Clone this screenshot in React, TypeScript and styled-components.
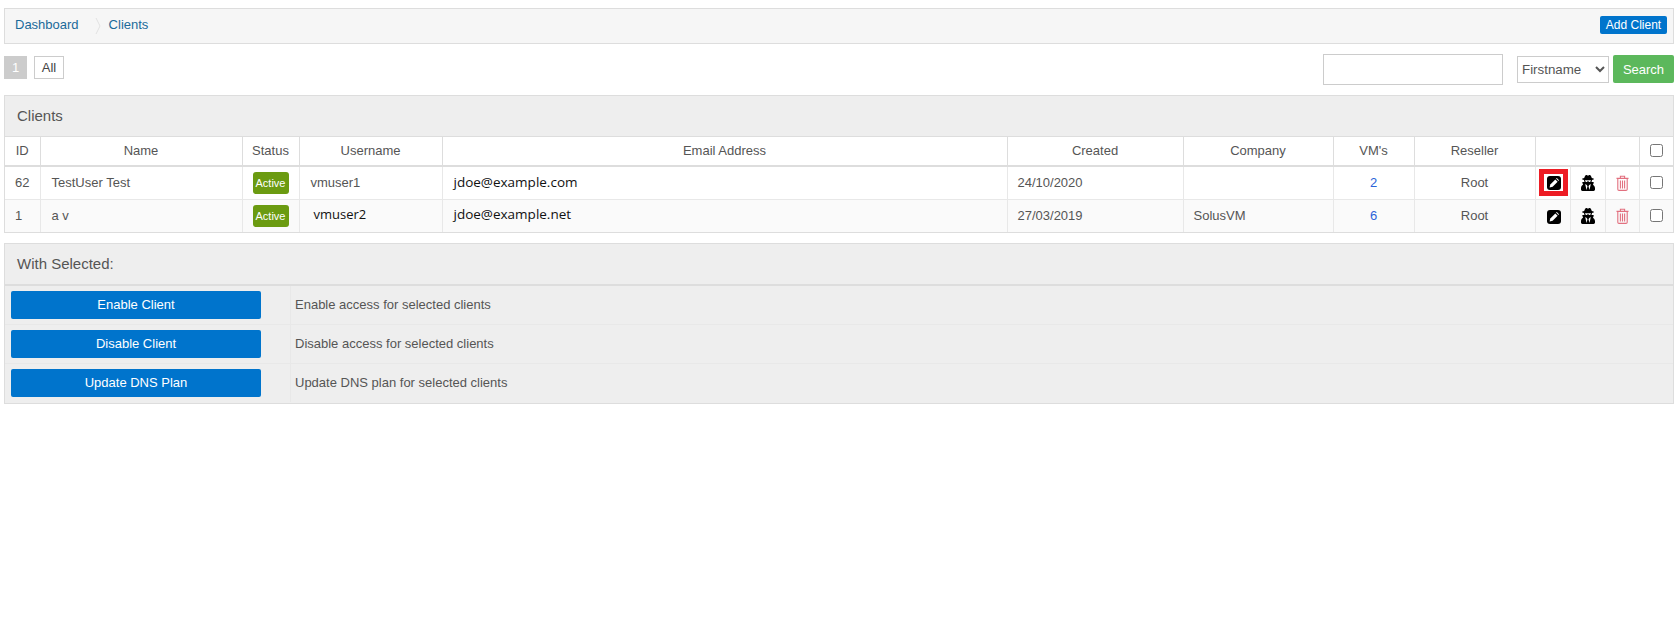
import React from "react";
import styled, { createGlobalStyle } from "styled-components";
import { FaUserSecret } from "react-icons/fa";

const Global = createGlobalStyle`
  html, body { margin: 0; background: #fff; }
  body { font-family: "Liberation Sans", Arial, sans-serif; font-size: 13px; color: #555; }
`;
const Page = styled.div`
  padding: 8px 6px 0 4px;
  display: flex;
  flex-direction: column;
`;
const Crumbs = styled.div`
  height: 36px;
  box-sizing: border-box;
  background: #f6f6f6;
  border: 1px solid #ddd;
  display: flex;
  align-items: center;
  padding: 0 6px 0 10px;
  color: #1f6f9c;
`;
const CrumbLink = styled.a`
  color: #1a6a9a;
  font-size: 13px;
  line-height: 16px;
  margin-top: -2px;
`;
const CrumbSep = styled.svg`
  width: 6px;
  height: 18px;
  margin: 0 8px 0 16px;
`;
const AddClient = styled.button`
  margin-left: auto;
  margin-top: -2px;
  height: 18px;
  width: 67px;
  padding: 0;
  border: 0;
  border-radius: 2px;
  background: #0074cc;
  color: #fff;
  font: 12px "Liberation Sans", Arial, sans-serif;
`;
const Toolbar = styled.div`
  height: 51px;
  display: flex;
  align-items: flex-start;
`;
const PageNow = styled.span`
  margin-top: 12px;
  width: 23px;
  height: 23px;
  background: #ccc;
  color: #fff;
  display: flex;
  align-items: center;
  justify-content: center;
`;
const PageAll = styled.span`
  margin: 12px 0 0 7px;
  width: 30px;
  height: 23px;
  box-sizing: border-box;
  border: 1px solid #ccc;
  color: #444;
  display: flex;
  align-items: center;
  justify-content: center;
`;
const SearchInput = styled.input`
  margin: 10px 0 0 auto;
  width: 180px;
  height: 31px;
  box-sizing: border-box;
  border: 1px solid #ccc;
  background: #fff;
`;
const FieldSelect = styled.select`
  margin: 12px 0 0 14px;
  width: 92px;
  height: 27px;
  box-sizing: border-box;
  border: 1px solid #ccc;
  background: #fff;
  color: #555;
  font: 13.33px "Liberation Sans", Arial, sans-serif;
`;
const SearchButton = styled.button`
  margin: 11px 0 0 4px;
  width: 61px;
  height: 28px;
  padding: 0;
  border: 0;
  border-radius: 2px;
  background: #5cb85c;
  color: #fff;
  font: 13px "Liberation Sans", Arial, sans-serif;
`;
const Panel = styled.section<{ $gap?: number }>`
  border: 1px solid #ddd;
  margin-top: ${(p) => p.$gap ?? 0}px;
  background: #fff;
`;
const PanelTitle = styled.h2`
  margin: 0;
  height: 40px;
  padding-left: 12px;
  background: #eee;
  font: 400 15px/40px "Liberation Sans", Arial, sans-serif;
  color: #555;
`;
const ActionTitle = styled(PanelTitle)`
  border-bottom: 1px solid #ddd;
`;
const Table = styled.table`
  width: 100%;
  table-layout: fixed;
  border-collapse: collapse;
`;
const Head = styled.th`
  height: 26px;
  padding: 0 0 2px;
  font-weight: 400;
  font-size: 13px;
  color: #555;
  border: 1px solid #ddd;
  border-bottom-width: 2px;
  text-align: center;
  &:first-child { border-left: 0; }
  &:last-child { border-right: 0; }
`;
const Row = styled.tr<{ $alt?: boolean }>`
  background: ${(p) => (p.$alt ? "#fafafa" : "#fff")};
  height: 33px;
`;
const Cell = styled.td<{ $center?: boolean; $pad?: number }>`
  padding: 0 0 0 ${(p) => p.$pad ?? (p.$center ? 0 : 11)}px;
  font-size: 13px;
  color: #555;
  border: 1px solid #e8e8e8;
  text-align: ${(p) => (p.$center ? "center" : "left")};
  overflow: hidden;
  white-space: nowrap;
  &:first-child { border-left: 0; }
  &:last-child { border-right: 0; }
  tr:last-child > & { border-bottom: 0; }
`;
const Badge = styled.span`
  display: inline-block;
  vertical-align: middle;
  margin-top: 1px;
  width: 36px;
  height: 22px;
  line-height: 22px;
  text-align: center;
  border-radius: 3px;
  background: #6b9b11;
  color: #fff;
  font-size: 11px;
  font-weight: 400;
`;
const Pasted = styled.span<{ $up?: number; $size?: number }>`
  position: relative;
  top: -${(p) => p.$up ?? 1}px;
  font-family: "Open Sans", "Noto Sans", sans-serif;
  font-size: ${(p) => p.$size ?? 13}px;
  color: #111;
`;
const VmLink = styled.a`
  color: #2a62d8;
  font-size: 13px;
`;
const IconWrap = styled.span<{ $hi?: boolean }>`
  display: inline-flex;
  align-items: center;
  justify-content: center;
  vertical-align: middle;
  box-sizing: border-box;
  width: ${(p) => (p.$hi ? "29px" : "auto")};
  height: ${(p) => (p.$hi ? "27px" : "auto")};
  border: ${(p) => (p.$hi ? "5px solid #ed1c24" : "0")};
  color: #000;
`;
const Check = styled.input`
  display: block;
  margin: 0 auto;
  width: 13px;
  height: 13px;
`;
const ActionRow = styled.div<{ $first?: boolean }>`
  display: grid;
  grid-template-columns: 285px 1fr;
  height: 39px;
  background: #eee;
  border-top: 1px solid ${(p) => (p.$first ? "#ddd" : "#e8e8e8")};
  box-sizing: border-box;
`;
const ButtonCell = styled.div`
  padding: 5px 0 0 6px;
`;
const ActionButton = styled.button`
  display: block;
  width: 250px;
  height: 28px;
  padding: 0 0 2px;
  border: 0;
  border-radius: 2px;
  background: #0074cc;
  color: #fff;
  font: 13px "Liberation Sans", Arial, sans-serif;
`;
const ActionText = styled.div`
  display: flex;
  align-items: center;
  padding: 0 0 2px 4px;
  border-left: 1px solid #e8e8e8;
  font-size: 13px;
  color: #555;
`;
const ActionList = styled.div`
  padding-bottom: 1px;
  background: #eee;
`;

const EditIcon = () => (
  <svg width="14" height="14" viewBox="0 0 14 14">
    <rect width="14" height="14" rx="3" fill="#000" />
    <path d="M2.6 11.4l.7-3 5-5 2.3 2.3-5 5z" fill="#fff" />
    <path d="M9 2.6l.8-.6 2.2 2.2-.6.8z" fill="#fff" />
  </svg>
);
const TrashIcon = () => (
  <svg width="13" height="16" viewBox="0 0 13 16" fill="none" stroke="#e2707f" strokeWidth="1.1">
    <path d="M.5 3.4h12M4.4 3.2V1.2h4.2v2M1.8 3.6v10.6c0 .7.5 1.2 1.2 1.2h7c.7 0 1.2-.5 1.2-1.2V3.6" />
    <path d="M4.4 5.6v7.8M6.5 5.6v7.8M8.6 5.6v7.8" />
  </svg>
);

const widths = [35, 202, 57, 143, 565, 176, 150, 81, 121, 35, 35, 34, 34];
const cols = widths.map((w, i) => <col key={i} style={{ width: w }} />);

type Client = { id: number; name: string; user: React.ReactNode; email: React.ReactNode; created: string; company: string; vms: number; hi?: boolean; alt?: boolean };
const clients: Client[] = [
  { id: 62, name: "TestUser Test", user: "vmuser1", email: <Pasted $size={13.5}>jdoe@example.com</Pasted>, created: "24/10/2020", company: "", vms: 2, hi: true },
  { id: 1, name: "a v", user: <Pasted $up={2} style={{ marginLeft: 3 }}>vmuser2</Pasted>, email: <Pasted $up={2} $size={13.5}>jdoe@example.net</Pasted>, created: "27/03/2019", company: "SolusVM", vms: 6, alt: true },
];
const actions = [
  ["Enable Client", "Enable access for selected clients"],
  ["Disable Client", "Disable access for selected clients"],
  ["Update DNS Plan", "Update DNS plan for selected clients"],
];

export default function App() {
  return (
    <Page>
      <Global />
      <Crumbs>
        <CrumbLink>Dashboard</CrumbLink>
        <CrumbSep viewBox="0 0 6 18"><path d="M1 1l4 8-4 8" fill="none" stroke="#e2e2e2" /></CrumbSep>
        <CrumbLink>Clients</CrumbLink>
        <AddClient>Add Client</AddClient>
      </Crumbs>
      <Toolbar>
        <PageNow>1</PageNow>
        <PageAll>All</PageAll>
        <SearchInput />
        <FieldSelect defaultValue="Firstname"><option>Firstname</option></FieldSelect>
        <SearchButton>Search</SearchButton>
      </Toolbar>
      <Panel>
        <PanelTitle>Clients</PanelTitle>
        <Table>
          <colgroup>{cols}</colgroup>
          <thead>
            <tr>
              <Head>ID</Head><Head>Name</Head><Head>Status</Head><Head>Username</Head>
              <Head>Email Address</Head><Head>Created</Head><Head>Company</Head><Head>VM's</Head>
              <Head>Reseller</Head><Head colSpan={3} /><Head><Check type="checkbox" /></Head>
            </tr>
          </thead>
          <tbody>
            {clients.map((c) => (
              <Row key={c.id} $alt={c.alt}>
                <Cell $pad={10}>{c.id}</Cell>
                <Cell>{c.name}</Cell>
                <Cell $center><Badge>Active</Badge></Cell>
                <Cell>{c.user}</Cell>
                <Cell>{c.email}</Cell>
                <Cell $pad={10}>{c.created}</Cell>
                <Cell $pad={10}>{c.company}</Cell>
                <Cell $center><VmLink>{c.vms}</VmLink></Cell>
                <Cell $center>Root</Cell>
                <Cell $center $pad={2}><IconWrap $hi={c.hi}><EditIcon /></IconWrap></Cell>
                <Cell $center><IconWrap><FaUserSecret size={16} /></IconWrap></Cell>
                <Cell $center><IconWrap><TrashIcon /></IconWrap></Cell>
                <Cell $center><Check type="checkbox" /></Cell>
              </Row>
            ))}
          </tbody>
        </Table>
      </Panel>
      <Panel $gap={10}>
        <ActionTitle>With Selected:</ActionTitle>
        <ActionList>
          {actions.map(([label, text], i) => (
            <ActionRow key={label} $first={i === 0}>
              <ButtonCell><ActionButton>{label}</ActionButton></ButtonCell>
              <ActionText>{text}</ActionText>
            </ActionRow>
          ))}
        </ActionList>
      </Panel>
    </Page>
  );
}
